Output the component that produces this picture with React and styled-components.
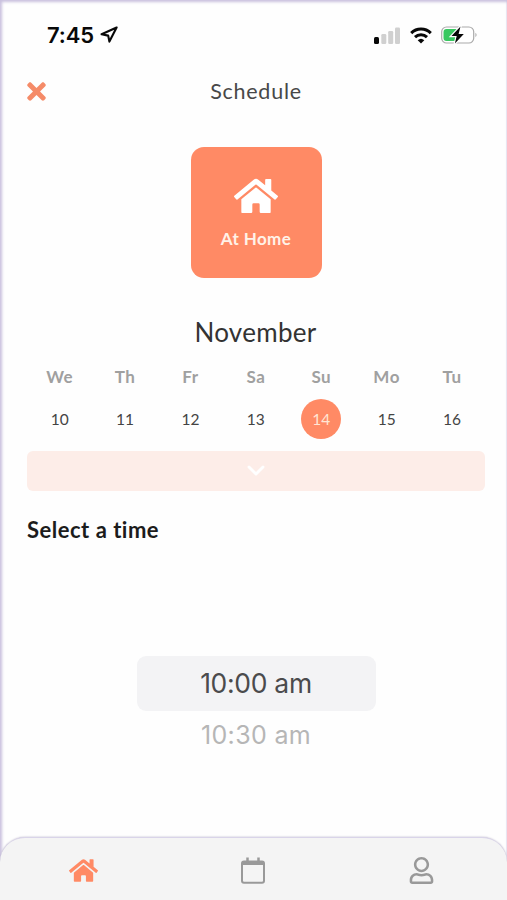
import React from "react";
import styled, { createGlobalStyle } from "styled-components";
import { FaHome, FaTimes, FaRegUser } from "react-icons/fa";

const CORAL = "#ff8a65";

const GlobalStyle = createGlobalStyle`
  * { box-sizing: border-box; }
  html, body { margin: 0; padding: 0; background: #fff; }
  body { overflow: hidden; }
`;

const Screen = styled.div`
  width: 507px;
  height: 900px;
  display: flex;
  flex-direction: column;
  background: #fefefe;
  box-shadow: inset 2px 2px 3px #c9c0de, inset -1px 0 1px #e9e5f1;
  font-family: "Lato", sans-serif;
  font-variant-ligatures: none;
  color: #333;
  overflow: hidden;
`;

const StatusBar = styled.header`
  height: 70px;
  padding: 0 29px 0 47px;
  display: flex;
  align-items: center;
  justify-content: space-between;
`;

const StatusGroup = styled.div`
  display: flex;
  align-items: center;
  gap: ${(p) => p.$gap}px;
`;

const Clock = styled.span`
  font: 600 22px/26px "Inter", sans-serif;
  letter-spacing: -0.1px;
  color: #080808;
`;

const TitleBar = styled.div`
  height: 43px;
  padding: 0 27px;
  display: grid;
  grid-template-columns: 20px 1fr 20px;
  align-items: center;
`;

const CloseButton = styled.button`
  display: flex;
  padding: 0;
  margin-left: -1px;
  border: 0;
  background: none;
  color: #f58b68;
`;

const Title = styled.h1`
  margin: 0 -5px 2px 0;
  text-align: center;
  font-size: 21.5px;
  line-height: 26px;
  font-weight: 400;
  letter-spacing: 0.75px;
  color: #484848;
`;

const PlaceCard = styled.button`
  align-self: center;
  flex: none;
  width: 131px;
  height: 131px;
  margin: 34px 0 0 5px;
  padding: 27px 0 0;
  border: 0;
  border-radius: 13px;
  display: flex;
  flex-direction: column;
  align-items: center;
  gap: 10px;
  background: ${CORAL};
  color: #fff;
`;

const PlaceName = styled.span`
  font: 700 17px/22px "Lato", sans-serif;
  letter-spacing: 0.4px;
  color: #fff2e8;
`;

const Month = styled.h2`
  margin: 37px 0 0 4px;
  text-align: center;
  font-size: 26px;
  line-height: 34px;
  font-weight: 400;
  letter-spacing: 0.3px;
  color: #333;
`;

const Week = styled.div`
  margin: 17px 21px 0 27px;
  display: grid;
  grid-template-columns: repeat(7, 65.4px);
`;

const Day = styled.div`
  display: flex;
  flex-direction: column;
  align-items: center;
  gap: 11px;
`;

const DayName = styled.span`
  font-size: 17px;
  line-height: 22px;
  font-weight: 700;
  letter-spacing: 0.5px;
  color: #a0a0a0;
`;

const DayNumber = styled.span`
  width: 40px;
  height: 40px;
  border-radius: 50%;
  display: flex;
  align-items: center;
  justify-content: center;
  font-size: 15.5px;
  background: ${(p) => (p.$selected ? CORAL : "transparent")};
  color: ${(p) => (p.$selected ? "#ffe6d4" : "#444")};
`;

const Expander = styled.button`
  flex: none;
  height: 40px;
  margin: 12px 22px 0 27px;
  padding: 0;
  border: 0;
  border-radius: 6px;
  display: flex;
  align-items: center;
  justify-content: center;
  background: #fdede8;
`;

const SectionTitle = styled.h3`
  margin: 25px 0 0 27px;
  font-size: 22px;
  line-height: 28px;
  font-weight: 700;
  letter-spacing: 0.5px;
  color: #1c1c1c;
`;

const TimePicker = styled.div`
  margin: 112px 0 0 5px;
  display: flex;
  flex-direction: column;
  align-items: center;
  font-family: "Inter", sans-serif;
`;

const SelectedTime = styled.div`
  width: 239px;
  height: 55px;
  border-radius: 9px;
  background: #f3f3f5;
  text-align: center;
  font-size: 26.5px;
  line-height: 55px;
  letter-spacing: -0.3px;
  color: #4b4b4d;
`;

const NextTime = styled.div`
  height: 46px;
  font-size: 25px;
  line-height: 48px;
  letter-spacing: 0.35px;
  color: #b6b6b6;
`;

const TabBar = styled.nav`
  height: 63px;
  margin-top: auto;
  padding: 2px 2px 0 0;
  display: grid;
  grid-template-columns: repeat(3, 169.3px);
  justify-content: center;
  align-items: center;
  border-top: 1px solid #d9d4e9;
  border-radius: 25px 25px 0 0;
  background: #f4f4f4;
  box-shadow: 0 0 2px #b4aec4;
`;

const Tab = styled.a`
  display: flex;
  justify-content: center;
  color: ${(p) => (p.$active ? CORAL : "#999")};
`;

const days = [
  ["We", 10], ["Th", 11], ["Fr", 12], ["Sa", 13], ["Su", 14], ["Mo", 15], ["Tu", 16],
];

const LocationIcon = () => (
  <svg width="18" height="18" viewBox="0 0 18 18" fill="none" stroke="#080808" strokeWidth="2.1" strokeLinejoin="round">
    <path d="M16.6 1.5 1.6 8.2 8.2 9.6 9.4 15.6Z" />
  </svg>
);

const SignalIcon = () => (
  <svg width="27" height="17" viewBox="0 0 27 17">
    <rect x="0" y="10" width="5" height="7" rx="1.5" fill="#080808" />
    <rect x="7.3" y="7" width="5" height="10" rx="1.3" fill="#d0d0d0" />
    <rect x="14.2" y="4" width="5" height="13" rx="1.3" fill="#d0d0d0" />
    <rect x="21" y="0.5" width="5" height="16.5" rx="1.3" fill="#d0d0d0" />
  </svg>
);

const WifiIcon = () => (
  <svg width="22" height="17" viewBox="0 0 22 17" fill="none" stroke="#080808" strokeWidth="3">
    <path d="M1.2 6.1a14 14 0 0 1 19.6 0" />
    <path d="M5 10.1a8.6 8.6 0 0 1 12 0" />
    <path d="M11 16.6 7.7 13.2a4.8 4.8 0 0 1 6.6 0Z" fill="#080808" stroke="none" />
  </svg>
);

const BatteryIcon = () => (
  <svg width="37" height="20" viewBox="0 0 37 20">
    <rect x="0.7" y="2" width="32" height="16" rx="4.8" fill="#fff" stroke="#aaa" strokeWidth="1.2" />
    <path d="M5.5 4H17v12H5.5a3 3 0 0 1-3-3V7a3 3 0 0 1 3-3Z" fill="#38c860" />
    <path d="M34.5 7.8q2 2.2 0 4.4Z" fill="#999" />
    <path d="M19.5 1.5 10.5 11h5.2l-1.8 7.5L22.8 9h-5.2Z" fill="#080808" stroke="#fff" strokeWidth="2.4" paintOrder="stroke" />
  </svg>
);

const ChevronIcon = () => (
  <svg width="18" height="12" viewBox="0 0 18 12" fill="none" stroke="#fff" strokeWidth="2.9" strokeLinecap="round" strokeLinejoin="round">
    <path d="m2 2 7 7 7-7" />
  </svg>
);

const CalendarIcon = () => (
  <svg width="24" height="27" viewBox="0 0 24 27" fill="none" stroke="currentColor">
    <rect x="1" y="4.5" width="22" height="21.2" rx="2" strokeWidth="2" />
    <path d="M1 6h22" strokeWidth="4" />
    <path d="M6.5 0.5v5M17.5 0.5v5" strokeWidth="2.5" />
  </svg>
);

export default function App() {
  return (
    <>
      <GlobalStyle />
      <Screen>
        <StatusBar>
          <StatusGroup $gap={6}>
            <Clock>7:45</Clock>
            <LocationIcon />
          </StatusGroup>
          <StatusGroup $gap={9}>
            <SignalIcon />
            <WifiIcon />
            <BatteryIcon />
          </StatusGroup>
        </StatusBar>
        <TitleBar>
          <CloseButton aria-label="Close"><FaTimes size={27} viewBox="0 0 352 512" /></CloseButton>
          <Title>Schedule</Title>
        </TitleBar>
        <PlaceCard>
          <FaHome size={44} />
          <PlaceName>At Home</PlaceName>
        </PlaceCard>
        <Month>November</Month>
        <Week>
          {days.map(([name, number]) => (
            <Day key={name}>
              <DayName>{name}</DayName>
              <DayNumber $selected={number === 14}>{number}</DayNumber>
            </Day>
          ))}
        </Week>
        <Expander aria-label="Expand calendar"><ChevronIcon /></Expander>
        <SectionTitle>Select a time</SectionTitle>
        <TimePicker>
          <SelectedTime>10:00 am</SelectedTime>
          <NextTime>10:30 am</NextTime>
        </TimePicker>
        <TabBar>
          <Tab $active><FaHome size={29} /></Tab>
          <Tab><CalendarIcon /></Tab>
          <Tab><FaRegUser size={27} /></Tab>
        </TabBar>
      </Screen>
    </>
  );
}
